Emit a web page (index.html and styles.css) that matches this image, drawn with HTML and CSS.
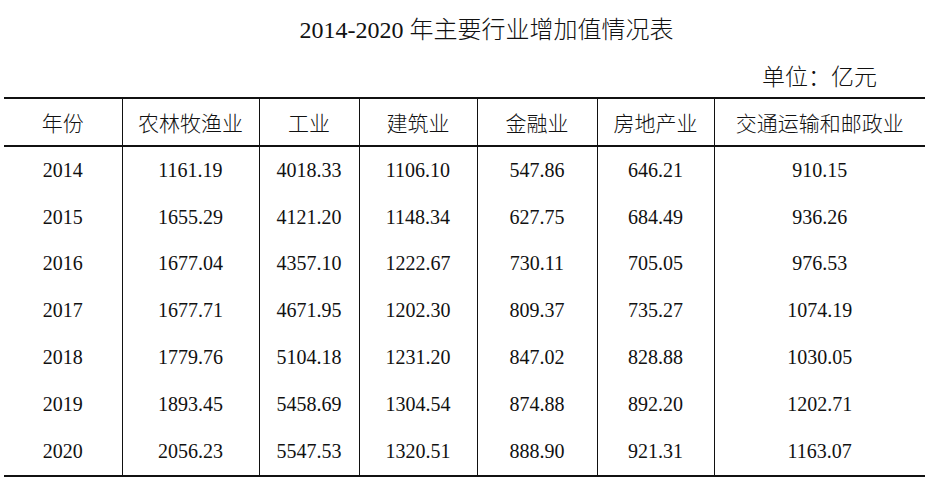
FILE: index.html
```html
<!DOCTYPE html>
<html lang="zh-CN">
<head>
<meta charset="utf-8">
<title>2014-2020 年主要行业增加值情况表</title>
<link rel="stylesheet" href="styles.css">
</head>
<body>
<div class="page">
  <h1 class="title">2014-2020 年主要行业增加值情况表</h1>
  <div class="unit">单位：亿元</div>
  <table class="data">
    <colgroup>
      <col class="c1"><col class="c2"><col class="c3"><col class="c4"><col class="c5"><col class="c6"><col class="c7">
    </colgroup>
    <thead>
      <tr>
        <th>年份</th><th>农林牧渔业</th><th>工业</th><th>建筑业</th><th>金融业</th><th>房地产业</th><th>交通运输和邮政业</th>
      </tr>
    </thead>
    <tbody>
      <tr><td>2014</td><td>1161.19</td><td>4018.33</td><td>1106.10</td><td>547.86</td><td>646.21</td><td>910.15</td></tr>
      <tr><td>2015</td><td>1655.29</td><td>4121.20</td><td>1148.34</td><td>627.75</td><td>684.49</td><td>936.26</td></tr>
      <tr><td>2016</td><td>1677.04</td><td>4357.10</td><td>1222.67</td><td>730.11</td><td>705.05</td><td>976.53</td></tr>
      <tr><td>2017</td><td>1677.71</td><td>4671.95</td><td>1202.30</td><td>809.37</td><td>735.27</td><td>1074.19</td></tr>
      <tr><td>2018</td><td>1779.76</td><td>5104.18</td><td>1231.20</td><td>847.02</td><td>828.88</td><td>1030.05</td></tr>
      <tr><td>2019</td><td>1893.45</td><td>5458.69</td><td>1304.54</td><td>874.88</td><td>892.20</td><td>1202.71</td></tr>
      <tr><td>2020</td><td>2056.23</td><td>5547.53</td><td>1320.51</td><td>888.90</td><td>921.31</td><td>1163.07</td></tr>
    </tbody>
  </table>
</div>
</body>
</html>
```
FILE: styles.css
```css
html, body {
  margin: 0;
  padding: 0;
  background: #fff;
}
body {
  color: #111;
  font-family: "Liberation Serif", "Noto Sans CJK SC", serif;
}
.page {
  width: 939px;
  display: flex;
  flex-direction: column;
}
.title {
  margin: 0;
  padding: 15px 0 0 34px;
  height: 30px;
  line-height: 30px;
  font-size: 24px;
  font-weight: 300;
  text-align: center;
  font-family: "Liberation Serif", "Noto Sans CJK SC", serif;
}
.unit {
  margin-top: 15px;
  height: 30px;
  line-height: 30px;
  padding-right: 62px;
  text-align: right;
  font-size: 23px;
  font-weight: 300;
  font-family: "Noto Sans CJK SC", sans-serif;
}
.data {
  margin: 7px 0 0 4px;
  width: 921px;
  border-collapse: collapse;
  table-layout: fixed;
}
.c1 { width: 118px; }
.c2 { width: 137px; }
.c3 { width: 100px; }
.c4 { width: 118px; }
.c5 { width: 120px; }
.c6 { width: 117px; }
.c7 { width: 211px; }
.data th,
.data td {
  padding: 0;
  text-align: center;
  border-left: 1px solid #111;
  border-right: 1px solid #111;
}
.data th:first-child,
.data td:first-child { border-left: none; }
.data th:last-child,
.data td:last-child { border-right: none; }
.data thead tr {
  border-top: 2px solid #111;
  border-bottom: 2px solid #111;
}
.data th {
  height: 46px;
  font-family: "Noto Sans CJK SC", sans-serif;
  font-weight: 300;
  font-size: 21px;
}
.data td {
  height: 46.8px;
  font-size: 20px;
}
.data tbody tr:last-child {
  border-bottom: 2px solid #111;
}
```
